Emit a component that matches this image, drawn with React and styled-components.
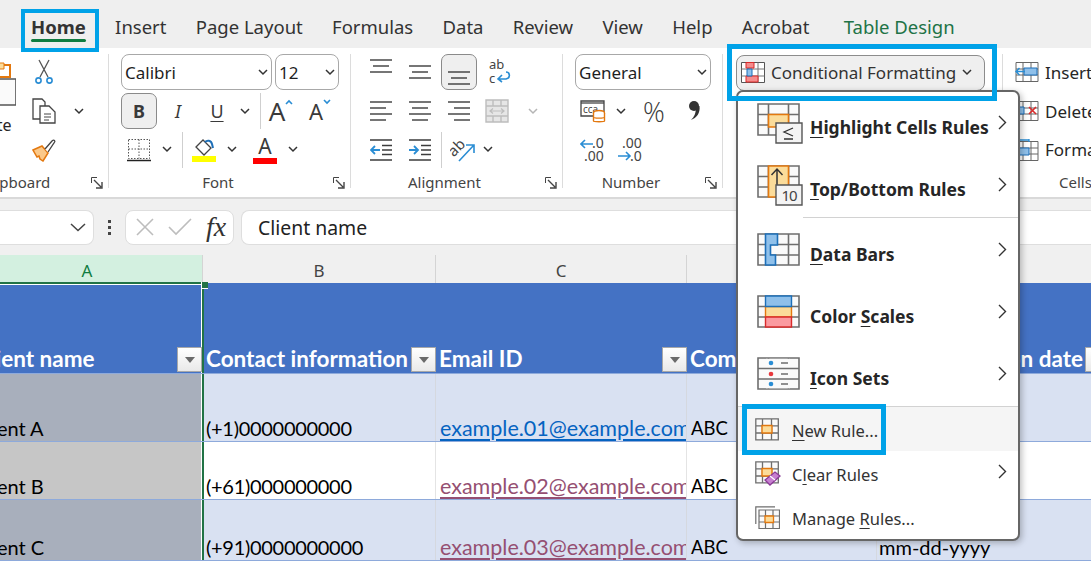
import React from "react";
import styled, { createGlobalStyle } from "styled-components";

const UI_FONT = `"Noto Sans", "Open Sans", sans-serif`;
const CELL_FONT = `Lato, "Noto Sans", sans-serif`;

const GRAY = "#6e6e6e";
const BLUE = "#2a8dd4";
const ORANGE = "#e3780f";
const SOFT = "#fbdc9a";

const Chevron = ({ color = "#333" }) => (
  <svg width="10" height="7" viewBox="0 0 10 7" fill="none">
    <path d="M1 1l4 4 4-4" stroke={color} strokeWidth="1.5" />
  </svg>
);

const Launcher = () => (
  <svg width="12" height="12" viewBox="0 0 12 12" fill="none" stroke="#444">
    <path d="M.5 6V.5H6" strokeWidth="1" />
    <path d="M3 3l7 7M5 11h6V5" strokeWidth="1.4" />
  </svg>
);

const Lines = ({ rows, width = 22 }) => (
  <svg width={width} height="26" viewBox={`0 0 ${width} 26`} stroke="#3c3c3c" strokeWidth="1.4">
    {rows.map(([y, x1, x2]) => (
      <path key={y + "" + x1} d={`M${x1} ${y}H${x2}`} />
    ))}
  </svg>
);

const SizeCaret = ({ down }) => (
  <svg width="8" height="6" viewBox="0 0 8 6" fill="none">
    <path d={down ? "M1 1l3 3 3-3" : "M1 5l3-3 3 3"} stroke={BLUE} strokeWidth="1.6" />
  </svg>
);

const CutIcon = () => (
  <svg width="20" height="26" viewBox="0 0 20 26" fill="none">
    <path d="M5 1l9 17M15 1L6 18" stroke="#555" strokeWidth="1.3" />
    <circle cx="4.5" cy="21.5" r="2.6" stroke={BLUE} strokeWidth="1.6" />
    <circle cx="15.5" cy="21.5" r="2.6" stroke={BLUE} strokeWidth="1.6" />
  </svg>
);

const CopyIcon = () => (
  <svg width="24" height="26" viewBox="0 0 24 26" fill="#fff" stroke="#444" strokeWidth="1.3">
    <path d="M1 1h9l3 3v17H1z" />
    <path d="M8 8h9l6 6v11H8z" />
    <path d="M12 16h7M12 19h7M12 22h5" strokeWidth="1" />
  </svg>
);

const PainterIcon = () => (
  <svg width="26" height="24" viewBox="0 0 26 24" fill="none">
    <path d="M2 12l9-4 6 7-5 8-3-2-1-3-2 1z" fill="#fbc98a" stroke={ORANGE} strokeWidth="1.5" />
    <path d="M14 11l7-8c2-2 4 0 2 2l-6 9" fill="#fff" stroke="#444" strokeWidth="1.3" />
  </svg>
);

const PasteIcon = () => (
  <svg width="50" height="44" viewBox="0 0 50 44">
    <path d="M20 3h24v12H20z" fill="#fff" stroke={ORANGE} strokeWidth="2" />
    <path d="M26 1h12v6H26z" fill={SOFT} stroke={ORANGE} />
    <path d="M14 17h36v26H14z" fill="#fafafa" stroke="#555" strokeWidth="1.6" />
  </svg>
);

const BorderIcon = () => (
  <svg width="24" height="24" viewBox="0 0 24 24" fill="none" stroke="#555">
    <path d="M1.5 1.5h21v19h-21zM12 1.5v19M1.5 11h21" strokeDasharray="1.5 1.5" />
    <path d="M0 22.5h24" stroke="#222" strokeWidth="1.5" />
  </svg>
);

const FillIcon = () => (
  <svg width="24" height="24" viewBox="0 0 24 24" fill="none">
    <path d="M4 9l7-7 8 8-7 7z" fill="#fff" stroke="#444" strokeWidth="1.3" />
    <path d="M13 4c2-2 6-2 7 2l1 4" stroke="#1d6fb8" strokeWidth="2" />
    <path d="M0 18h24v6H0z" fill="#ffff00" />
  </svg>
);

const WrapIcon = () => (
  <svg width="22" height="28" viewBox="0 0 22 28" fill="none">
    <text x="0" y="11" fontFamily={UI_FONT} fontSize="13" fill="#444">ab</text>
    <text x="0" y="25" fontFamily={UI_FONT} fontSize="13" fill="#444">c</text>
    <path d="M17 14c4 0 5 6 0 7h-7M13 17l-4 4 4 3" stroke={BLUE} strokeWidth="1.6" />
  </svg>
);

const MergeIcon = () => (
  <svg width="24" height="24" viewBox="0 0 24 24" fill="#e6e6e6" stroke="#bdbdbd" strokeWidth="1.4">
    <path d="M1 1h22v22H1z" />
    <path d="M1 7h22M1 17h22M8 1v6M16 1v6M8 17v6M16 17v6" />
    <path d="M5 12h14M8 9.5L5 12l3 2.5M16 9.5l3 2.5-3 2.5" fill="none" strokeWidth="1.2" />
  </svg>
);

const IndentIcon = ({ out }) => (
  <svg width="22" height="22" viewBox="0 0 22 22" fill="none">
    <path d="M0 1h22M12 6.500h10M12 11h10M12 15.500h10M0 21h22" stroke="#3c3c3c" strokeWidth="1.4" />
    {out ? (
      <path d="M10 11H1M5 7l-4 4 4 4" stroke={BLUE} strokeWidth="1.8" />
    ) : (
      <path d="M0 11h9M5 7l4 4-4 4" stroke={BLUE} strokeWidth="1.8" />
    )}
  </svg>
);

const OrientIcon = () => (
  <svg width="26" height="26" viewBox="0 0 26 26" fill="none">
    <text x="-1" y="15" fontFamily={UI_FONT} fontSize="15" fill="#444" transform="rotate(-45 8 12)">ab</text>
    <path d="M9 24L24 8M16 8h8v8" stroke={BLUE} strokeWidth="1.6" />
  </svg>
);

const AccountingIcon = () => (
  <svg width="26" height="24" viewBox="0 0 26 24" fill="none">
    <path d="M1 2h23v15H1z" stroke="#444" strokeWidth="1.3" />
    <path d="M1 4h23" stroke="#444" strokeWidth="1.3" />
    <text x="3" y="14" fontFamily={UI_FONT} fontSize="10" fill="#444">cca</text>
    <ellipse cx="19" cy="14" rx="5.500" ry="2.500" fill="#fff" stroke={ORANGE} strokeWidth="1.4" />
    <path d="M13.500 14v8c0 1 11 1 11 0v-8M13.500 18c0 1.500 11 1.500 11 0" fill="#fff" stroke={ORANGE} strokeWidth="1.4" />
  </svg>
);

const CommaIcon = () => (
  <svg width="14" height="22" viewBox="0 0 14 22">
    <circle cx="7" cy="6" r="5" fill="#333" />
    <path d="M9 6h3.500c1 7-3 12-8.500 14 3-3 5-6 5-14z" fill="#333" />
  </svg>
);

const DecimalIcon = ({ more }) => (
  <svg width="26" height="26" viewBox="0 0 26 26" fill="none">
    {more ? (
      <>
        <text x="4" y="11" fontFamily={UI_FONT} fontSize="14" fill="#444">.00</text>
        <text x="12" y="24" fontFamily={UI_FONT} fontSize="14" fill="#444">.0</text>
        <path d="M0 19h12M8 15l4 4-4 4" stroke={BLUE} strokeWidth="1.600" />
      </>
    ) : (
      <>
        <text x="12" y="11" fontFamily={UI_FONT} fontSize="14" fill="#444">.0</text>
        <text x="4" y="24" fontFamily={UI_FONT} fontSize="14" fill="#444">.00</text>
        <path d="M13 7H1M5 3L1 7l4 4" stroke={BLUE} strokeWidth="1.600" />
      </>
    )}
  </svg>
);

const CfIcon = () => (
  <svg width="24" height="21" viewBox="0 0 24 21" fill="#fff">
    <path d="M.5.500h23v20H.500z" stroke="#555" />
    <path d="M.5 7h23M.5 14h23M7 .5v20M17 .5v20" stroke="#777" />
    <path d="M5 .5h8V6H5zM5 14h12v6H5z" fill="#f58c8c" stroke="#d92b2b" />
    <path d="M6 7h5v7H6z" fill="#8fc0ea" stroke="#1d6fb8" />
  </svg>
);

const CellsInsertIcon = () => (
  <svg width="24" height="20" viewBox="0 0 24 20" fill="#fff">
    <path d="M1 .5h22v19H1zM1 7h22M1 13h22M8 .5v19M16 .5v19" stroke="#666" />
    <path d="M9 6h13v7H9z" fill="#8fc0ea" stroke="#1d6fb8" />
    <path d="M10 9.500H1M4.500 6L1 9.500 4.500 13" stroke={BLUE} strokeWidth="1.500" fill="none" />
  </svg>
);

const CellsDeleteIcon = () => (
  <svg width="24" height="20" viewBox="0 0 24 20" fill="#fff">
    <path d="M1 .5h22v19H1zM1 7h22M1 13h22M8 .5v19M16 .5v19" stroke="#666" />
    <path d="M1 6h8v7H1z" fill="#8fc0ea" stroke="#1d6fb8" />
    <path d="M14 6l7 7M21 6l-7 7" stroke="#d92b2b" strokeWidth="1.600" />
  </svg>
);

const CellsFormatIcon = () => (
  <svg width="24" height="22" viewBox="0 0 24 22" fill="#fff">
    <path d="M1 2.500h22v19H1zM1 9h22M1 15h22M8 2.500v19M16 2.500v19" stroke="#666" />
    <path d="M3 9h11v7H3z" fill="#8fc0ea" stroke="#1d6fb8" />
    <path d="M3 1h11M14 0v3" stroke={BLUE} strokeWidth="1.300" />
  </svg>
);

const BigGrid = () => (
  <path d="M1 1h41v31H1zM1 11.500h41M1 22h41M11.500 1v31M31.500 1v31" fill="#fafafa" stroke={GRAY} strokeWidth="1.600" />
);

const HighlightMenuIcon = () => (
  <svg width="46" height="41" viewBox="0 0 46 41">
    <BigGrid />
    <path d="M11.500 11.500h20V24h-20z" fill={SOFT} stroke={ORANGE} strokeWidth="1.600" />
    <path d="M19 20h26v20H19z" fill="#f4f4f4" stroke="#555" strokeWidth="1.400" />
    <path d="M36 25l-9 4 9 4M27 36h9" fill="none" stroke="#333" strokeWidth="1.300" />
  </svg>
);

const TopMenuIcon = () => (
  <svg width="46" height="41" viewBox="0 0 46 41">
    <BigGrid />
    <path d="M11.500 1h20v31h-20z" fill={SOFT} stroke={ORANGE} strokeWidth="1.600" />
    <path d="M20 4v16M14.500 10L20 4l5.500 6" fill="none" stroke="#333" strokeWidth="1.500" />
    <path d="M19 20h26v20H19z" fill="#f4f4f4" stroke="#555" strokeWidth="1.400" />
    <text x="32" y="36" textAnchor="middle" fontFamily={UI_FONT} fontSize="15" fill="#444" letterSpacing="-1">10</text>
  </svg>
);

const DataBarsIcon = () => (
  <svg width="46" height="34" viewBox="0 0 46 34">
    <BigGrid />
    <path d="M8.500 1h12v11h-7v10h5v10h-10z" fill="#8fc0ea" stroke="#1d6fb8" strokeWidth="1.600" />
  </svg>
);

const ColorScalesIcon = () => (
  <svg width="46" height="34" viewBox="0 0 46 34">
    <BigGrid />
    <path d="M8.500 11.500h26V22h-26z" fill={SOFT} stroke={ORANGE} strokeWidth="1.400" />
    <path d="M8.500 1h26v10.500h-26z" fill="#8fc0ea" stroke="#1d6fb8" strokeWidth="1.400" />
    <path d="M8.500 22h26v10h-26z" fill="#fb9aa0" stroke="#d92b2b" strokeWidth="1.400" />
  </svg>
);

const IconSetsIcon = () => (
  <svg width="46" height="34" viewBox="0 0 46 34">
    <BigGrid />
    <path d="M9 1.800h24v29.500H9z" fill="#fafafa" />
    <path d="M9 11.500h24M9 22h24" stroke={GRAY} strokeWidth="1.600" />
    <circle cx="14" cy="6" r="2.300" fill={BLUE} />
    <circle cx="14" cy="17" r="2.300" fill="#e8383d" />
    <circle cx="14" cy="27" r="2.300" fill={BLUE} />
    <path d="M24 6h7M24 17h7M24 27h7" stroke={GRAY} strokeWidth="1.500" />
  </svg>
);

const SmallGrid = () => (
  <path d="M.8.800h22.500v21H.800zM.8 7.800h22.500M.8 15h22.500M7.500.8v21M16.500.8v21" fill="#fafafa" stroke={GRAY} strokeWidth="1.300" />
);

const NewRuleIcon = () => (
  <svg width="24" height="23" viewBox="0 0 24 23">
    <SmallGrid />
    <path d="M7 7.500h10V15H7z" fill={SOFT} stroke={ORANGE} strokeWidth="1.400" />
  </svg>
);

const ClearRulesIcon = () => (
  <svg width="26" height="25" viewBox="0 0 26 25">
    <SmallGrid />
    <path d="M7 7.500h10V15H7z" fill={SOFT} stroke={ORANGE} strokeWidth="1.400" />
    <path d="M10 19l10-8 5 4-10 9z" fill="#c77fd0" stroke="#8a3a96" strokeWidth="1.300" />
    <path d="M15 15l5 4" stroke="#fff" strokeWidth="1.300" />
  </svg>
);

const ManageRulesIcon = () => (
  <svg width="25" height="23" viewBox="0 0 25 23">
    <path d="M.8 18V.8H20" fill="none" stroke={GRAY} strokeWidth="1.200" />
    <path d="M4 4h20.500v18.500H4zM4 10h20.500M4 16h20.500M10.500 4v18.500M18 4v18.500" fill="#fafafa" stroke={GRAY} strokeWidth="1.200" />
    <path d="M10 10h8.500v6.500H10z" fill={SOFT} stroke={ORANGE} strokeWidth="1.300" />
  </svg>
);

const SubArrow = ({ raised }) => (
  <ArrowSlot $raised={raised}>
    <svg width="9" height="15" viewBox="0 0 9 15" fill="none">
      <path d="M1 1l6.500 6.500L1 14" stroke="#333" strokeWidth="1.400" />
    </svg>
  </ArrowSlot>
);

const tabs = ["Insert", "Page Layout", "Formulas", "Data", "Review", "View", "Help", "Acrobat"];

const menuBig = [
  { icon: <HighlightMenuIcon />, key: "H", rest: "ighlight Cells Rules", before: "" },
  { icon: <TopMenuIcon />, key: "T", rest: "op/Bottom Rules", before: "" },
  { divider: true },
  { icon: <DataBarsIcon />, key: "D", rest: "ata Bars", before: "" },
  { icon: <ColorScalesIcon />, key: "S", rest: "cales", before: "Color " },
  { icon: <IconSetsIcon />, key: "I", rest: "con Sets", before: "" },
];

const rows = [
  { name: "Client A", phone: "(+1)0000000000", mail: "example.01@example.com", visited: false, h: 68, shade: true },
  { name: "Client B", phone: "(+61)000000000", mail: "example.02@example.com", visited: true, h: 58, shade: false },
  { name: "Client C", phone: "(+91)0000000000", mail: "example.03@example.com", visited: true, h: 61, shade: true, date: "mm-dd-yyyy" },
];

const heads = ["Contact information", "Email ID", "Company"];

export default function App() {
  return (
    <Page>
      <GlobalStyle />
      <TabBar>
        <Tab $active>Home</Tab>
        {tabs.map((t) => (
          <Tab key={t}>{t}</Tab>
        ))}
        <Tab $green>Table Design</Tab>
      </TabBar>

      <Ribbon>
        <Group $w={109}>
          <ClipBody>
            <PasteCol>
              <PasteIcon />
              <PasteText>Paste</PasteText>
            </PasteCol>
            <ClipTools>
              <Row><Tool $w={52}><CutIcon /></Tool></Row>
              <Row><Tool $w={52}><CopyIcon /></Tool><Tool $w={18}><Chevron /></Tool></Row>
              <Row><Tool $w={52}><PainterIcon /></Tool></Row>
            </ClipTools>
          </ClipBody>
          <Footer>
            <ClipLabel>Clipboard</ClipLabel>
            <LaunchSlot><Launcher /></LaunchSlot>
          </Footer>
        </Group>

        <Group $w={242} $pad={12}>
          <Rows>
            <Row $gap={3}>
              <Combo $w={151}><ComboText>Calibri</ComboText><Chevron /></Combo>
              <Combo $w={64}><ComboText>12</ComboText><Chevron /></Combo>
            </Row>
            <Row>
              <Tool $w={36} $active><Glyph $bold>B</Glyph></Tool>
              <Tool $w={42}><Glyph $italic>I</Glyph></Tool>
              <Tool $w={36}><Glyph $under>U</Glyph></Tool>
              <Tool $w={20}><Chevron /></Tool>
              <Sep $w={10} />
              <Tool $w={32}><SizeA $size={26}>A</SizeA><CaretSlot><SizeCaret /></CaretSlot></Tool>
              <Tool $w={46}><SizeA $size={22}>A</SizeA><CaretSlot><SizeCaret down /></CaretSlot></Tool>
            </Row>
            <Row>
              <Tool $w={35}><BorderIcon /></Tool>
              <Tool $w={22}><Chevron /></Tool>
              <Sep $w={8} />
              <Tool $w={36}><FillIcon /></Tool>
              <Tool $w={20}><Chevron /></Tool>
              <Tool $w={46}><ColorA>A</ColorA></Tool>
              <Tool $w={10}><Chevron /></Tool>
            </Row>
          </Rows>
          <Footer>
            <Label>Font</Label>
            <LaunchSlot><Launcher /></LaunchSlot>
          </Footer>
        </Group>

        <Group $w={212} $pad={11}>
          <Rows>
            <Row>
              <Tool $w={38}><Lines rows={[[1, 0, 22], [7, 3, 19], [13, 0, 22]]} /></Tool>
              <Tool $w={39}><Lines rows={[[7, 0, 22], [13, 3, 19], [19, 0, 22]]} /></Tool>
              <Tool $w={36} $active $ml={2}><Lines rows={[[13, 0, 22], [19, 3, 19], [25, 0, 22]]} /></Tool>
              <Tool $w={46}><WrapIcon /></Tool>
            </Row>
            <Row>
              <Tool $w={38}><Lines rows={[[4, 0, 22], [10, 0, 16], [16, 0, 22], [22, 0, 16]]} /></Tool>
              <Tool $w={39}><Lines rows={[[4, 0, 22], [10, 3, 19], [16, 0, 22], [22, 3, 19]]} /></Tool>
              <Tool $w={40}><Lines rows={[[4, 0, 22], [10, 6, 22], [16, 0, 22], [22, 6, 22]]} /></Tool>
              <Tool $w={36}><MergeIcon /></Tool>
              <Tool $w={36}><Chevron color="#b5b5b5" /></Tool>
            </Row>
            <Row>
              <Tool $w={38}><IndentIcon out /></Tool>
              <Tool $w={39}><IndentIcon /></Tool>
              <Sep $w={4} />
              <Tool $w={40}><OrientIcon /></Tool>
              <Tool $w={10}><Chevron /></Tool>
            </Row>
          </Rows>
          <Footer>
            <Label>Alignment</Label>
            <LaunchSlot><Launcher /></LaunchSlot>
          </Footer>
        </Group>

        <Group $w={160} $pad={12}>
          <Rows>
            <Row>
              <Combo $w={136}><ComboText>General</ComboText><Chevron /></Combo>
            </Row>
            <Row>
              <Tool $w={36}><AccountingIcon /></Tool>
              <Tool $w={20}><Chevron /></Tool>
              <Tool $w={46}><Percent>%</Percent></Tool>
              <Tool $w={34}><CommaIcon /></Tool>
            </Row>
            <Row>
              <Tool $w={35}><DecimalIcon /></Tool>
              <Tool $w={42}><DecimalIcon more /></Tool>
            </Row>
          </Rows>
          <Footer>
            <Label>Number</Label>
            <LaunchSlot><Launcher /></LaunchSlot>
          </Footer>
        </Group>

        <Group $w={280} $pad={13}>
          <Rows>
            <Row>
              <CfButton>
                <CfIcon />
                <CfText>Conditional Formatting</CfText>
                <Chevron />
              </CfButton>
            </Row>
          </Rows>
        </Group>

        <Group $w={88} $pad={12} $last>
          <Rows>
            <CellsRow><CellsInsertIcon /><CellsText>Insert</CellsText></CellsRow>
            <CellsRow><CellsDeleteIcon /><CellsText>Delete</CellsText></CellsRow>
            <CellsRow><CellsFormatIcon /><CellsText>Format</CellsText></CellsRow>
          </Rows>
          <Footer>
            <CellsLabel>Cells</CellsLabel>
          </Footer>
        </Group>
      </Ribbon>

      <FormulaBar>
        <NameBox>
          <svg width="16" height="9" viewBox="0 0 16 9" fill="none">
            <path d="M1 1l7 6.500L15 1" stroke="#444" strokeWidth="1.500" />
          </svg>
        </NameBox>
        <Dots>
          <Dot />
          <Dot />
          <Dot />
        </Dots>
        <FxBox>
          <svg width="18" height="18" viewBox="0 0 18 18" fill="none">
            <path d="M1 1l16 16M17 1L1 17" stroke="#bdbdbd" strokeWidth="1.600" />
          </svg>
          <svg width="24" height="18" viewBox="0 0 24 18" fill="none">
            <path d="M1 9l7 7L23 1" stroke="#bdbdbd" strokeWidth="1.600" />
          </svg>
          <Fx>fx</Fx>
        </FxBox>
        <FormulaInput>Client name</FormulaInput>
      </FormulaBar>

      <ColHeaders>
        <ColHead $selected>A</ColHead>
        <ColHead>B</ColHead>
        <ColHead>C</ColHead>
        <ColHead>D</ColHead>
        <ColHead>E</ColHead>
      </ColHeaders>

      <Sheet>
        <HeadRow>
          <HeadCell $selected>
            <span>Client name</span>
            <FilterBtn><FilterArrow /></FilterBtn>
          </HeadCell>
          {heads.map((h) => (
            <HeadCell key={h}>
              <span>{h}</span>
              <FilterBtn><FilterArrow /></FilterBtn>
            </HeadCell>
          ))}
          <HeadCell $end>
            <span>Subscription date</span>
            <FilterBtn><FilterArrow /></FilterBtn>
          </HeadCell>
        </HeadRow>
        {rows.map((r) => (
          <DataRow key={r.name} $h={r.h} $shade={r.shade}>
            <Cell $selected $shade={r.shade} $pad={2}>{r.name}</Cell>
            <Cell $pad={3} $track={-0.3}>{r.phone}</Cell>
            <Cell $pad={4} $size={21.5}><MailLink $visited={r.visited}>{r.mail}</MailLink></Cell>
            <Cell $pad={4} $size={18.5}>ABC</Cell>
            <Cell $pad={2}>{r.date}</Cell>
          </DataRow>
        ))}
        <FillHandle />
      </Sheet>

      <Menu>
        {menuBig.map((m, i) =>
          m.divider ? (
            <InnerDivider key={i} />
          ) : (
            <BigItem key={m.key}>
              <BigIconSlot>{m.icon}</BigIconSlot>
              <BigText>
                {m.before}
                <u>{m.key}</u>
                {m.rest}
              </BigText>
              <SubArrow raised />
            </BigItem>
          )
        )}
        <FullDivider />
        <SmallItem $hover>
          <SmallIconSlot><NewRuleIcon /></SmallIconSlot>
          <SmallText><u>N</u>ew Rule...</SmallText>
        </SmallItem>
        <SmallItem>
          <SmallIconSlot><ClearRulesIcon /></SmallIconSlot>
          <SmallText>C<u>l</u>ear Rules</SmallText>
          <SubArrow />
        </SmallItem>
        <SmallItem>
          <SmallIconSlot><ManageRulesIcon /></SmallIconSlot>
          <SmallText>Manage <u>R</u>ules...</SmallText>
        </SmallItem>
      </Menu>

      <Callout $x={21} $y={9} $w={78} $h={43} $b={4} />
      <Callout $x={727} $y={44} $w={270} $h={57} $b={5} />
      <Callout $x={742} $y={404} $w={144} $h={51} $b={5} />
    </Page>
  );
}

const GlobalStyle = createGlobalStyle`
  html, body {
    margin: 0;
    padding: 0;
    overflow: hidden;
  }
  u {
    text-underline-offset: 3px;
  }
  svg {
    flex: none;
  }
`;

const Page = styled.div`
  position: relative;
  width: 1091px;
  height: 561px;
  overflow: hidden;
  background: #fff;
  font-family: ${UI_FONT};
  color: #262626;
`;

const TabBar = styled.div`
  display: flex;
  align-items: flex-start;
  gap: 29.3px;
  height: 48px;
  padding: 12px 0 0 31px;
  box-sizing: border-box;
  background: #efefef;
`;

const Tab = styled.div`
  position: relative;
  font-size: 18.5px;
  line-height: 30px;
  white-space: nowrap;
  font-weight: ${(p) => (p.$active ? 700 : 400)};
  color: ${(p) => (p.$green ? "#217346" : "#333")};
  margin-left: ${(p) => (p.$green ? "5px" : "0")};
  ${(p) =>
    p.$active &&
    `&::after {
      content: "";
      position: absolute;
      left: 0;
      right: 0;
      bottom: 0;
      height: 3px;
      border-radius: 2px;
      background: #107c41;
    }`}
`;

const Ribbon = styled.div`
  display: flex;
  height: 151px;
  padding-top: 6px;
  box-sizing: border-box;
  background: #fff;
  border-bottom: 2px solid #d9d9d9;
`;

const Group = styled.div`
  flex: none;
  width: ${(p) => p.$w}px;
  height: 134px;
  box-sizing: border-box;
  padding-left: ${(p) => p.$pad || 0}px;
  border-right: ${(p) => (p.$last ? "none" : "1px solid #dcdcdc")};
  display: flex;
  flex-direction: column;
`;

const Rows = styled.div`
  display: flex;
  flex-direction: column;
  gap: 2px;
  height: 114px;
`;

const Row = styled.div`
  display: flex;
  align-items: center;
  gap: ${(p) => p.$gap || 0}px;
  height: 37px;
`;

const ClipBody = styled.div`
  display: flex;
  height: 114px;
`;

const PasteCol = styled.div`
  flex: none;
  width: 54px;
  margin-left: -36px;
  display: flex;
  flex-direction: column;
  align-items: center;
  padding-top: 8px;
`;

const PasteText = styled.div`
  font-size: 16px;
  line-height: 22px;
  margin-top: 8px;
`;

const ClipTools = styled.div`
  display: flex;
  flex-direction: column;
  gap: 2px;
`;

const ClipLabel = styled.div`
  margin-left: -18px;
  font-size: 15px;
  line-height: 20px;
  flex: 1;
  color: #444;
`;

const Tool = styled.div`
  flex: none;
  display: flex;
  align-items: center;
  justify-content: center;
  width: ${(p) => p.$w}px;
  height: 36px;
  margin-left: ${(p) => p.$ml || 0}px;
  box-sizing: border-box;
  ${(p) =>
    p.$active &&
    `background: #efefef;
     border: 1px solid #8a8a8a;
     border-radius: 7px;`}
`;

const Sep = styled.div`
  flex: none;
  width: ${(p) => p.$w}px;
  height: 36px;
  display: flex;
  justify-content: center;
  &::before {
    content: "";
    width: 1px;
    background: #cfcfcf;
  }
`;

const Combo = styled.div`
  flex: none;
  width: ${(p) => p.$w}px;
  height: 36px;
  box-sizing: border-box;
  display: flex;
  align-items: center;
  justify-content: space-between;
  padding: 0 3px;
  background: #fff;
  border: 1px solid #a8a8a8;
  border-radius: 8px;
`;

const ComboText = styled.span`
  font-size: 17px;
  color: #1f1f1f;
`;

const Glyph = styled.span`
  font-size: 18px;
  color: #3a3a3a;
  font-weight: ${(p) => (p.$bold ? 700 : 400)};
  font-style: ${(p) => (p.$italic ? "italic" : "normal")};
  text-decoration: ${(p) => (p.$under ? "underline" : "none")};
  text-underline-offset: 3px;
`;

const SizeA = styled.span`
  font-size: ${(p) => p.$size}px;
  line-height: 30px;
  color: #3a3a3a;
`;

const CaretSlot = styled.span`
  display: flex;
  align-self: flex-start;
  margin-top: 6px;
`;

const ColorA = styled.span`
  width: 24px;
  text-align: center;
  font-size: 21px;
  line-height: 23px;
  color: #3a3a3a;
  border-bottom: 6px solid #ff0000;
`;

const Percent = styled.span`
  font-family: "Open Sans", sans-serif;
  font-weight: 300;
  font-size: 27px;
  color: #3a3a3a;
`;

const Footer = styled.div`
  display: flex;
  align-items: center;
  height: 20px;
  margin-top: 4px;
`;

const Label = styled.div`
  flex: 1;
  text-align: center;
  padding-right: 18px;
  font-size: 15px;
  line-height: 20px;
  color: #444;
  white-space: nowrap;
`;

const LaunchSlot = styled.div`
  flex: none;
  width: 17px;
  display: flex;
  align-items: center;
  margin-top: 2px;
`;

const CfButton = styled.div`
  width: 249px;
  height: 36px;
  box-sizing: border-box;
  display: flex;
  align-items: center;
  gap: 6px;
  padding: 0 15px 0 4px;
  background: #efefef;
  border: 1px solid #8c8c8c;
  border-radius: 8px;
`;

const CfText = styled.span`
  flex: 1;
  font-size: 17px;
  white-space: nowrap;
  color: #333;
`;

const CellsRow = styled.div`
  display: flex;
  align-items: center;
  gap: 6px;
  height: 37px;
`;

const CellsText = styled.span`
  font-size: 17px;
  white-space: nowrap;
`;

const CellsLabel = styled(Label)`
  text-align: left;
  padding: 0 0 0 44px;
`;

const FormulaBar = styled.div`
  display: flex;
  align-items: center;
  height: 56px;
  box-sizing: border-box;
  background: #f0f0f0;
`;

const NameBox = styled.div`
  width: 94px;
  height: 35px;
  box-sizing: border-box;
  display: flex;
  align-items: center;
  justify-content: flex-end;
  padding-right: 7px;
  background: #fff;
  border: 1px solid #dedede;
  border-left: none;
  border-radius: 0 8px 8px 0;
`;

const Dots = styled.div`
  width: 31px;
  display: flex;
  flex-direction: column;
  align-items: center;
  gap: 3px;
`;

const Dot = styled.div`
  width: 3px;
  height: 3px;
  background: #444;
`;

const FxBox = styled.div`
  width: 109px;
  height: 35px;
  box-sizing: border-box;
  display: flex;
  align-items: center;
  gap: 14px;
  padding-left: 10px;
  background: #fff;
  border: 1px solid #dedede;
  border-radius: 8px;
`;

const Fx = styled.span`
  font-family: "Liberation Serif", serif;
  font-style: italic;
  font-size: 28px;
  line-height: 30px;
  color: #333;
`;

const FormulaInput = styled.div`
  flex: 1;
  height: 35px;
  box-sizing: border-box;
  margin-left: 7px;
  padding-left: 16px;
  line-height: 33px;
  font-size: 19.4px;
  color: #222;
  background: #fff;
  border: 1px solid #dedede;
  border-right: none;
  border-radius: 8px 0 0 8px;
`;

const COLUMNS = "231px 233px 251px 190px 233px";

const ColHeaders = styled.div`
  display: grid;
  grid-template-columns: ${COLUMNS};
  height: 28px;
  margin-left: -28px;
  background: #f0f0f0;
`;

const ColHead = styled.div`
  text-align: center;
  font-size: 17px;
  line-height: 31px;
  color: ${(p) => (p.$selected ? "#107c41" : "#444")};
  background: ${(p) => (p.$selected ? "#d3f0e0" : "#f0f0f0")};
  border-right: 1px solid #d4d4d4;
`;

const Sheet = styled.div`
  position: relative;
  margin-left: -28px;
  font-family: ${CELL_FONT};
  font-size: 20px;
`;

const HeadRow = styled.div`
  display: grid;
  grid-template-columns: ${COLUMNS};
  height: 91px;
  background: #4472c4;
  border-bottom: 1px solid #8eaadb;
  box-sizing: border-box;
`;

const HeadCell = styled.div`
  display: flex;
  align-items: flex-end;
  justify-content: ${(p) => (p.$end ? "flex-end" : "space-between")};
  gap: 2px;
  box-sizing: border-box;
  padding-left: 3px;
  padding-bottom: 1px;
  font-size: 22.5px;
  font-weight: 700;
  color: #fff;
  white-space: nowrap;
  overflow: hidden;
  ${(p) =>
    p.$selected &&
    `margin: -1px -1px 0 0;
     border-right: 2px solid #217346;
     border-top: 2px solid #217346;
     box-shadow: inset 0 1px 0 #fff, inset -1px 0 0 #fff;`}
  span {
    line-height: 26px;
  }
`;

const FilterBtn = styled.div`
  flex: none;
  width: 25px;
  height: 25px;
  box-sizing: border-box;
  display: flex;
  align-items: center;
  justify-content: center;
  background: linear-gradient(#ffffff, #e9e9e9);
  border: 1px solid #a8a8a8;
`;

const FilterArrow = styled.div`
  width: 0;
  height: 0;
  border-left: 5px solid transparent;
  border-right: 5px solid transparent;
  border-top: 6px solid #6a6a6a;
`;

const DataRow = styled.div`
  display: grid;
  grid-template-columns: ${COLUMNS};
  height: ${(p) => p.$h}px;
  box-sizing: border-box;
  background: ${(p) => (p.$shade ? "#d9e1f2" : "#fff")};
  border-bottom: 1px solid #8eaadb;
`;

const Cell = styled.div`
  box-sizing: border-box;
  padding-left: ${(p) => p.$pad || 0}px;
  display: flex;
  align-items: flex-end;
  line-height: 26px;
  font-size: ${(p) => p.$size || 20}px;
  letter-spacing: ${(p) => p.$track || 0}px;
  color: #000;
  white-space: nowrap;
  overflow: hidden;
  border-right: 1px solid ${(p) => (p.$selected ? "transparent" : "rgba(210, 210, 210, 0.6)")};
  ${(p) =>
    p.$selected &&
    `margin-right: -1px;
     background: ${p.$shade ? "#a8afbc" : "#c6c6c6"};
     border-right: 2px solid #217346;
     box-shadow: inset -1px 0 0 #fff;`}
`;

const MailLink = styled.span`
  color: ${(p) => (p.$visited ? "#954f72" : "#0563c1")};
  text-decoration: underline;
  text-underline-offset: 3px;
`;

const FillHandle = styled.div`
  position: absolute;
  left: 229px;
  top: -1px;
  width: 6px;
  height: 6px;
  background: #217346;
  border-left: 1px solid #fff;
  border-bottom: 1px solid #fff;
`;

const Menu = styled.div`
  position: absolute;
  left: 736px;
  top: 90px;
  width: 284px;
  height: 451px;
  box-sizing: border-box;
  background: #fff;
  border: 2px solid #666;
  border-radius: 7px;
  box-shadow: 2px 2px 6px rgba(0, 0, 0, 0.25);
  overflow: hidden;
`;

const BigItem = styled.div`
  display: flex;
  align-items: center;
  height: 62px;
  box-sizing: border-box;
  padding: 8px 0 0 19px;
`;

const BigIconSlot = styled.div`
  flex: none;
  width: 53px;
  display: flex;
  margin-bottom: 8px;
`;

const BigText = styled.div`
  flex: 1;
  font-size: 17.5px;
  font-weight: 700;
  white-space: nowrap;
  color: #262626;
`;

const ArrowSlot = styled.div`
  flex: none;
  width: 20px;
  display: flex;
  margin-bottom: ${(p) => (p.$raised ? "10px" : "4px")};
`;

const InnerDivider = styled.div`
  height: 1px;
  margin: 1px 0 1px 65px;
  background: #d2d2d2;
`;

const FullDivider = styled.div`
  height: 1px;
  margin-top: 1px;
  background: #d2d2d2;
`;

const SmallItem = styled.div`
  display: flex;
  align-items: center;
  height: 44px;
  box-sizing: border-box;
  padding-left: 17px;
  background: ${(p) => (p.$hover ? "#f5f5f5" : "transparent")};
`;

const SmallIconSlot = styled.div`
  flex: none;
  width: 37px;
  display: flex;
`;

const SmallText = styled.div`
  flex: 1;
  padding-top: 2px;
  font-size: 16.5px;
  white-space: nowrap;
  color: #333;
`;

// blue annotation frames drawn over the screenshot
const Callout = styled.div`
  position: absolute;
  left: ${(p) => p.$x}px;
  top: ${(p) => p.$y}px;
  width: ${(p) => p.$w}px;
  height: ${(p) => p.$h}px;
  box-sizing: border-box;
  border: ${(p) => p.$b}px solid #00a2e8;
`;
